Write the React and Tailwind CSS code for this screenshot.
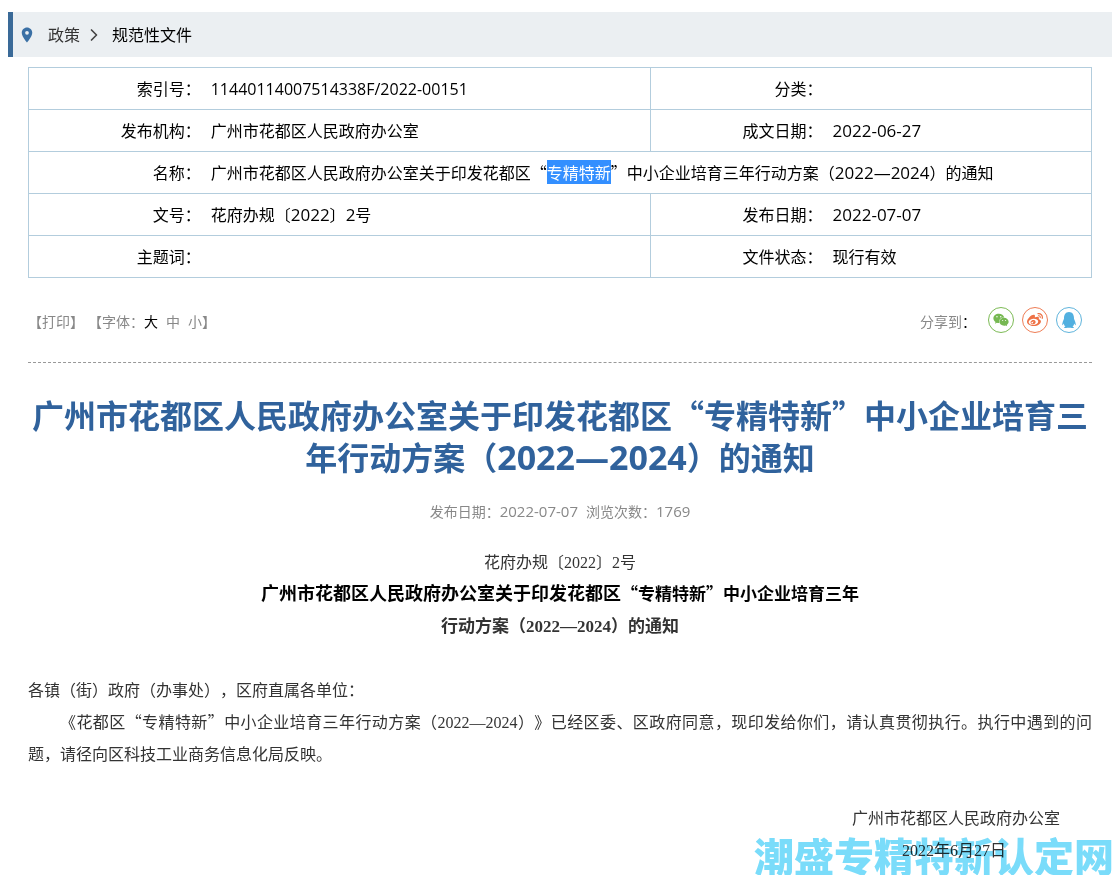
import { useState } from "react";
import { MdLocationOn } from "react-icons/md";
import { FaWeibo, FaWeixin, FaQq } from "react-icons/fa";
import { ChevronRight } from "lucide-react";
import clsx from "clsx";

const shareLinks = [
  { label: "微信", icon: FaWeixin, color: "border-[#7dbb56] text-[#76b852]" },
  { label: "微博", icon: FaWeibo, color: "border-[#ee7d55] text-[#ee7145]" },
  { label: "QQ", icon: FaQq, color: "border-[#5fb4dc] text-[#52b0e0]" },
];

const fontSizes = ["大", "中", "小"];

// latin digits next to Chinese text
function Num({ children, className = "text-[17px]" }) {
  return (
    <span className={clsx("font-['Open_Sans','Noto_Sans',sans-serif] leading-none", className)}>
      {children}
    </span>
  );
}

function SerifNum({ children }) {
  return <span className="font-['Liberation_Serif',serif] leading-none">{children}</span>;
}

function Label({ children }) {
  return (
    <th scope="row" className="border-l border-[#b3cddd] p-0 pb-0.5 text-right font-normal">
      {children}：
    </th>
  );
}

function Value({ children, colSpan }) {
  return (
    <td colSpan={colSpan} className="pt-0 pr-0 pb-0.5 pl-2.5">
      {children}
    </td>
  );
}

function Breadcrumb() {
  return (
    <nav className="ml-2 mr-0.5 flex h-[45px] items-center border-l-[5px] border-[#3a6a98] bg-[#ebeff2] pl-[5px]">
      <MdLocationOn size={18} className="text-[#3a70a5]" />
      <a href="#policy" className="ml-3 pb-0.5 text-[#333]">政策</a>
      <ChevronRight size={20} className="mx-1 text-[#444]" />
      <a href="#files" className="ml-1 pb-0.5 text-black">规范性文件</a>
    </nav>
  );
}

function InfoTable() {
  return (
    <table className="w-full table-fixed border-collapse border border-[#b3cddd] text-black">
      <colgroup>
        <col className="w-[16.2%]" />
        <col className="w-[42.3%]" />
        <col className="w-[16.2%]" />
        <col className="w-[25.3%]" />
      </colgroup>
      <tbody>
        <tr className="h-[42px] border-b border-[#b3cddd]">
          <Label>索引号</Label>
          <Value><Num className="text-base">11440114007514338F/2022-00151</Num></Value>
          <Label>分类</Label>
          <Value />
        </tr>
        <tr className="h-[42px] border-b border-[#b3cddd]">
          <Label>发布机构</Label>
          <Value>广州市花都区人民政府办公室</Value>
          <Label>成文日期</Label>
          <Value><Num>2022-06-27</Num></Value>
        </tr>
        <tr className="h-[42px] border-b border-[#b3cddd]">
          <Label>名称</Label>
          <Value colSpan={3}>
            广州市花都区人民政府办公室关于印发花都区“
            <mark className="bg-[#338fff] text-white">专精特新</mark>
            ”中小企业培育三年行动方案（<Num>2022—2024</Num>）的通知
          </Value>
        </tr>
        <tr className="h-[42px] border-b border-[#b3cddd]">
          <Label>文号</Label>
          <Value>花府办规〔<Num>2022</Num>〕<Num>2</Num>号</Value>
          <Label>发布日期</Label>
          <Value><Num>2022-07-07</Num></Value>
        </tr>
        <tr className="h-[42px]">
          <Label>主题词</Label>
          <Value />
          <Label>文件状态</Label>
          <Value>现行有效</Value>
        </tr>
      </tbody>
    </table>
  );
}

function Toolbar() {
  const [size, setSize] = useState("大");

  return (
    <div className="flex h-[85px] items-center justify-between border-b border-dashed border-[#999] pr-2.5 text-sm text-[#888]">
      <div className="flex items-center pt-0.5">
        <button type="button">【打印】</button>
        <span className="ml-1">【字体：</span>
        <div className="flex gap-2">
          {fontSizes.map((s) => (
            <button
              key={s}
              type="button"
              onClick={() => setSize(s)}
              className={s === size ? "text-black" : ""}
            >
              {s}
            </button>
          ))}
        </div>
        <span>】</span>
      </div>
      <div className="flex items-center gap-2">
        <span className="mr-1 pt-0.5">
          分享到<span className="text-black">：</span>
        </span>
        {shareLinks.map(({ label, icon: Icon, color }) => (
          <a
            key={label}
            href="#share"
            aria-label={label}
            className={clsx("flex h-[26px] w-[26px] items-center justify-center rounded-full border", color)}
          >
            <Icon size={16} />
          </a>
        ))}
      </div>
    </div>
  );
}

function Article() {
  return (
    <article>
      <h1 className="mt-[30px] text-center text-[32px] leading-[42px] font-bold text-[#30629c]">
        广州市花都区人民政府办公室关于印发花都区“专精特新”中小企业培育三年行动方案（
        <Num className="text-[34px]">2022—2024</Num>）的通知
      </h1>
      <p className="mt-6 flex justify-center gap-2 text-sm text-[#888]">
        <span>发布日期：<Num className="text-[15px]">2022-07-07</Num></span>
        <span>浏览次数：<Num className="text-[15px]">1769</Num></span>
      </p>

      <div className="mt-6 leading-8 text-[#333]">
        <p className="text-center">花府办规〔<SerifNum>2022</SerifNum>〕<SerifNum>2</SerifNum>号</p>
        <p className="text-center font-bold text-black">
          <span className="text-lg leading-none">广州市花都区人民政府办公室关于印发花都区</span>
          <span className="text-[17px] leading-none">“专精特新”中小企业培育三年</span>
        </p>
        <p className="text-center text-[17px] leading-8 font-bold">
          行动方案（<SerifNum>2022—2024</SerifNum>）的通知
        </p>
        <p className="mt-8">各镇（街）政府（办事处），区府直属各单位：</p>
        <p className="indent-8 text-justify">
          《花都区“专精特新”中小企业培育三年行动方案（<SerifNum>2022—2024</SerifNum>
          ）》已经区委、区政府同意，现印发给你们，请认真贯彻执行。执行中遇到的问题，请径向区科技工业商务信息化局反映。
        </p>
        <p className="mt-8 pr-8 text-right">广州市花都区人民政府办公室</p>
        <p className="pr-[86px] text-right">
          <SerifNum>2022</SerifNum>年<SerifNum>6</SerifNum>月<SerifNum>27</SerifNum>日
        </p>
      </div>
    </article>
  );
}

export default function App() {
  return (
    <div
      lang="zh-CN"
      className="relative overflow-hidden bg-white pt-3 pb-2.5 font-['Noto_Sans_CJK_SC',sans-serif] text-base [text-spacing-trim:space-all]"
    >
      <Breadcrumb />
      <main className="mt-2.5 ml-7 mr-[22px]">
        <InfoTable />
        <Toolbar />
        <Article />
      </main>
      <div className="pointer-events-none absolute right-0 bottom-0 text-[40px] leading-[40px] font-black whitespace-nowrap text-[#7adcfa] mix-blend-multiply">
        潮盛专精特新认定网
      </div>
    </div>
  );
}
